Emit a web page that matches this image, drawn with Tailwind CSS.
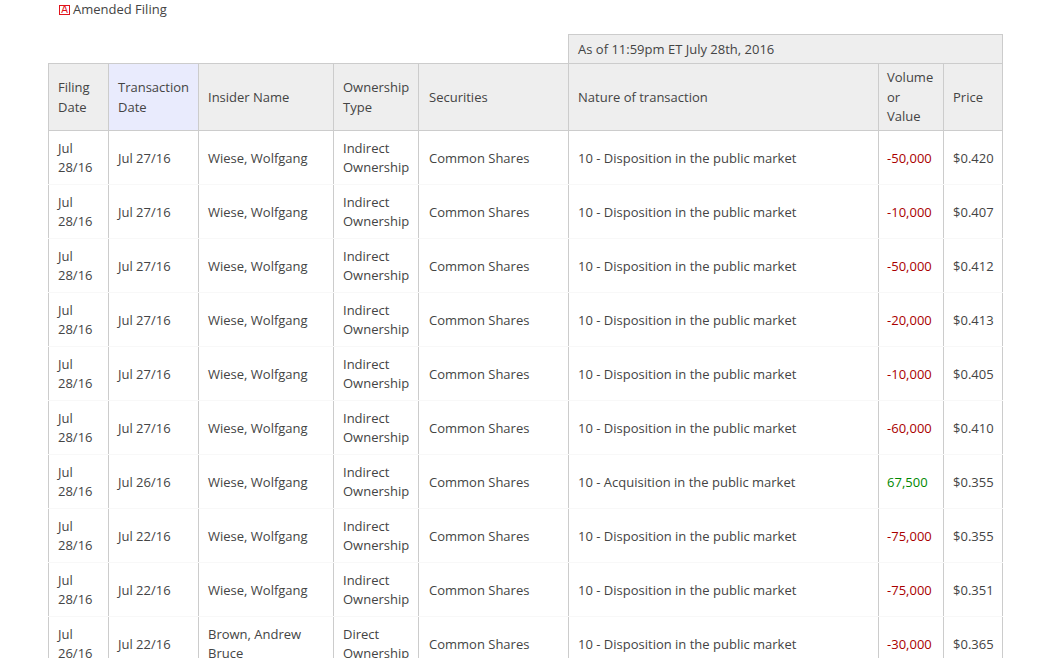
<!DOCTYPE html>
<html lang="en">
<head>
<meta charset="utf-8">
<title>Insider Trades</title>
<script src="https://cdn.jsdelivr.net/npm/@tailwindcss/browser@4"></script>
</head>
<body class="h-[658px] overflow-hidden bg-white font-['Open_Sans',sans-serif] text-[13px] leading-[19.5px] text-[#444]">
  <!-- legend -->
  <div class="flex items-center pl-[59px] h-[19px]">
    <span class="flex items-center justify-center w-[11px] h-[10px] mt-[1px] border border-[#e0141c] text-[#e0141c] text-[10px] leading-none mr-[3px] font-['Liberation_Sans',sans-serif]">A</span>
    <span>Amended Filing</span>
  </div>
  <div class="pl-[48px] pt-[15px]">
    <table class="table-fixed border-collapse w-[954px]">
      <colgroup>
        <col class="w-[60px]"><col class="w-[90px]"><col class="w-[135px]"><col class="w-[85px]"><col class="w-[150px]"><col class="w-[310px]"><col class="w-[65px]"><col class="w-[59px]">
      </colgroup>
      <thead>
        <tr class="h-[29px]">
          <th colspan="5" class="p-0"></th>
          <th colspan="3" class="font-normal text-left px-[9px] pt-[1px] bg-[#eee] border border-[#ccc]">As of 11:59pm ET July 28th, 2016</th>
        </tr>
        <tr class="h-[67px] bg-[#eee] text-left [&>th]:font-normal [&>th]:px-[9px] [&>th]:pt-[1px] [&>th]:border [&>th]:border-[#ccc]">
          <th>Filing Date</th>
          <th class="bg-[#e9ebfd]">Transaction Date</th>
          <th>Insider Name</th>
          <th>Ownership Type</th>
          <th class="!pl-[10px]">Securities</th>
          <th>Nature of transaction</th>
          <th class="!pl-[8px]">Volume or Value</th>
          <th>Price</th>
        </tr>
      </thead>
      <tbody class="[&_td]:px-[9px] [&_td]:pt-[2px] [&_td:nth-child(1)]:pt-[1px] [&_td:nth-child(4)]:pt-[1px] [&_td:nth-child(5)]:pl-[10px] [&_td:nth-child(7)]:pl-[8px] [&_td]:pb-0 [&_td]:border-x [&_td]:border-x-[#ccc] [&_td]:border-y [&_td]:border-y-[#f8f8f8] [&_tr]:h-[54px]">
        <tr><td>Jul 28/16</td><td>Jul 27/16</td><td>Wiese, Wolfgang</td><td>Indirect Ownership</td><td>Common Shares</td><td>10 - Disposition in the public market</td><td class="text-[#a00]">-50,000</td><td>$0.420</td></tr>
        <tr><td>Jul 28/16</td><td>Jul 27/16</td><td>Wiese, Wolfgang</td><td>Indirect Ownership</td><td>Common Shares</td><td>10 - Disposition in the public market</td><td class="text-[#a00]">-10,000</td><td>$0.407</td></tr>
        <tr><td>Jul 28/16</td><td>Jul 27/16</td><td>Wiese, Wolfgang</td><td>Indirect Ownership</td><td>Common Shares</td><td>10 - Disposition in the public market</td><td class="text-[#a00]">-50,000</td><td>$0.412</td></tr>
        <tr><td>Jul 28/16</td><td>Jul 27/16</td><td>Wiese, Wolfgang</td><td>Indirect Ownership</td><td>Common Shares</td><td>10 - Disposition in the public market</td><td class="text-[#a00]">-20,000</td><td>$0.413</td></tr>
        <tr><td>Jul 28/16</td><td>Jul 27/16</td><td>Wiese, Wolfgang</td><td>Indirect Ownership</td><td>Common Shares</td><td>10 - Disposition in the public market</td><td class="text-[#a00]">-10,000</td><td>$0.405</td></tr>
        <tr><td>Jul 28/16</td><td>Jul 27/16</td><td>Wiese, Wolfgang</td><td>Indirect Ownership</td><td>Common Shares</td><td>10 - Disposition in the public market</td><td class="text-[#a00]">-60,000</td><td>$0.410</td></tr>
        <tr><td>Jul 28/16</td><td>Jul 26/16</td><td>Wiese, Wolfgang</td><td>Indirect Ownership</td><td>Common Shares</td><td>10 - Acquisition in the public market</td><td class="text-[#080]">67,500</td><td>$0.355</td></tr>
        <tr><td>Jul 28/16</td><td>Jul 22/16</td><td>Wiese, Wolfgang</td><td>Indirect Ownership</td><td>Common Shares</td><td>10 - Disposition in the public market</td><td class="text-[#a00]">-75,000</td><td>$0.355</td></tr>
        <tr><td>Jul 28/16</td><td>Jul 22/16</td><td>Wiese, Wolfgang</td><td>Indirect Ownership</td><td>Common Shares</td><td>10 - Disposition in the public market</td><td class="text-[#a00]">-75,000</td><td>$0.351</td></tr>
        <tr><td>Jul 26/16</td><td>Jul 22/16</td><td class="!pt-[1px]">Brown, Andrew Bruce</td><td>Direct Ownership</td><td>Common Shares</td><td>10 - Disposition in the public market</td><td class="text-[#a00]">-30,000</td><td>$0.365</td></tr>
      </tbody>
    </table>
  </div>
</body>
</html>
